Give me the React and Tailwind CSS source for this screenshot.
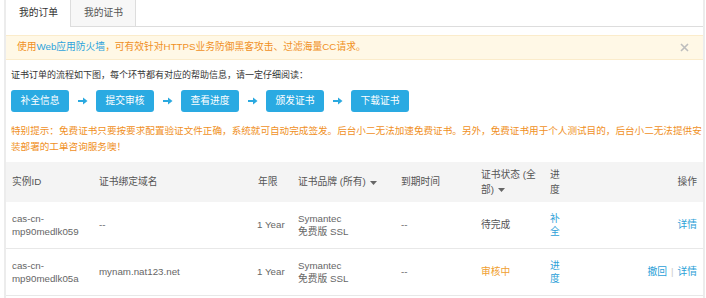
import React from 'react'

const Arrow = () => (
  <svg width="10" height="8" viewBox="0 0 10 8" className="mx-[8.5px] shrink-0">
    <path d="M0 4h6" stroke="#2aa9e0" strokeWidth="2" />
    <path d="M5 0.5 9.5 4 5 7.5z" fill="#2aa9e0" />
  </svg>
)

const Caret = () => (
  <svg width="7" height="4" viewBox="0 0 7 4" className="inline-block ml-[4px] align-middle">
    <path d="M0 0h7L3.5 4z" fill="#666" />
  </svg>
)

const Step = ({ children }) => (
  <div className="h-[22px] px-[9.5px] rounded-[3px] bg-[#2aaae2] text-white flex items-center whitespace-nowrap">{children}</div>
)

const rows = [
  { id: 'cas-cn-mp90medlk059', domain: '--', status: '待完成', progress: '补全', done: false },
  { id: 'cas-cn-mp90medlk05a', domain: 'mynam.nat123.net', status: '审核中', progress: '进度', done: true },
]

export default function App() {
  return (
    <div className="w-[706px] h-[298px] overflow-hidden bg-white text-[9.75px] font-['Liberation_Sans','Noto_Sans_CJK_SC',sans-serif]">
      <div className="ml-[4px] w-[701px] h-full border-l-2 border-r-2 border-[#ececec]">
        {/* tabs */}
        <div className="flex h-[27px] border-b border-[#dddddd]">
          <div className="w-[65px] h-[27px] -mb-px bg-white border-r border-[#dddddd] flex items-center pl-[13px] text-[#333]">我的订单</div>
          <div className="w-[65px] bg-[#f7f7f7] border-r border-[#dddddd] flex items-center pl-[13px] text-[#555]">我的证书</div>
        </div>

        {/* alert */}
        <div className="mt-[8px] h-[25px] bg-[#fff8e6] border-y border-[#fbeccb] flex items-center justify-between pl-[11px] pr-[14px] text-[#f0901e]">
          <span>
            使用<span className="text-[#2ea3dc]">Web应用防火墙</span>，可有效针对HTTPS业务防御黑客攻击、过滤海量CC请求。
          </span>
          <svg width="9" height="9" viewBox="0 0 9 9">
            <path d="M1 1l7 7M8 1l-7 7" stroke="#bdbdbd" strokeWidth="1.6" />
          </svg>
        </div>

        <div className="pl-[5px]">
          <p className="mt-[7px] leading-[16px] text-[9px] text-[#333]">证书订单的流程如下图，每个环节都有对应的帮助信息，请一定仔细阅读：</p>
          <div className="mt-[7px] flex items-center">
            <Step>补全信息</Step>
            <Arrow />
            <Step>提交审核</Step>
            <Arrow />
            <Step>查看进度</Step>
            <Arrow />
            <Step>颁发证书</Step>
            <Arrow />
            <Step>下载证书</Step>
          </div>
          <p className="mt-[11px] leading-[16px] text-[9.6px] text-[#f0901e] whitespace-nowrap overflow-hidden">
            <span className="block">特别提示：免费证书只要按要求配置验证文件正确，系统就可自动完成签发。后台小二无法加速免费证书。另外，免费证书用于个人测试目的，后台小二无法提供安</span>
            <span className="block">装部署的工单咨询服务噢！</span>
          </p>
        </div>

        {/* table */}
        <div className="mt-[7px]">
          <div className="flex items-center h-[40px] bg-[#f4f4f4] text-[#555] leading-[15.5px]">
            <div className="w-[87px] pl-[6px]">实例ID</div>
            <div className="w-[159px] pl-[6px]">证书绑定域名</div>
            <div className="w-[40px] pl-[6px] whitespace-nowrap">年限</div>
            <div className="w-[103px] pl-[6px] whitespace-nowrap">证书品牌 (所有)<Caret /></div>
            <div className="w-[81px] pl-[6px]">到期时间</div>
            <div className="w-[68px] pl-[5px] pr-[5px]">证书状态 (全部)<Caret /></div>
            <div className="w-[26px] pl-[6px] pr-[6px]">进度</div>
            <div className="flex-1 pr-[6px] text-right">操作</div>
          </div>
          {rows.map((r) => (
            <div key={r.id} className="flex items-center h-[47px] border-b border-[#e8e8e8] text-[#666] leading-[13.5px]">
              <div className="w-[87px] pl-[6px] pr-[4px]">{r.id}</div>
              <div className="w-[159px] pl-[6px]">{r.domain}</div>
              <div className="w-[40px] pl-[5px] whitespace-nowrap">1 Year</div>
              <div className="w-[103px] pl-[6px]">Symantec<br />免费版 SSL</div>
              <div className="w-[81px] pl-[6px]">--</div>
              <div className={`w-[68px] pl-[5px] pr-[5px] ${r.done ? 'text-[#f0a030]' : 'text-[#555]'}`}>{r.status}</div>
              <div className="w-[26px] pl-[6px] pr-[6px] text-[#2d9fd8]">{r.progress}</div>
              <div className="flex-1 pr-[6px] text-right text-[#2d9fd8]">
                {r.done && (
                  <>
                    撤回<span className="text-[#cccccc] mx-[4px]">|</span>
                  </>
                )}
                详情
              </div>
            </div>
          ))}
        </div>
      </div>
    </div>
  )
}
